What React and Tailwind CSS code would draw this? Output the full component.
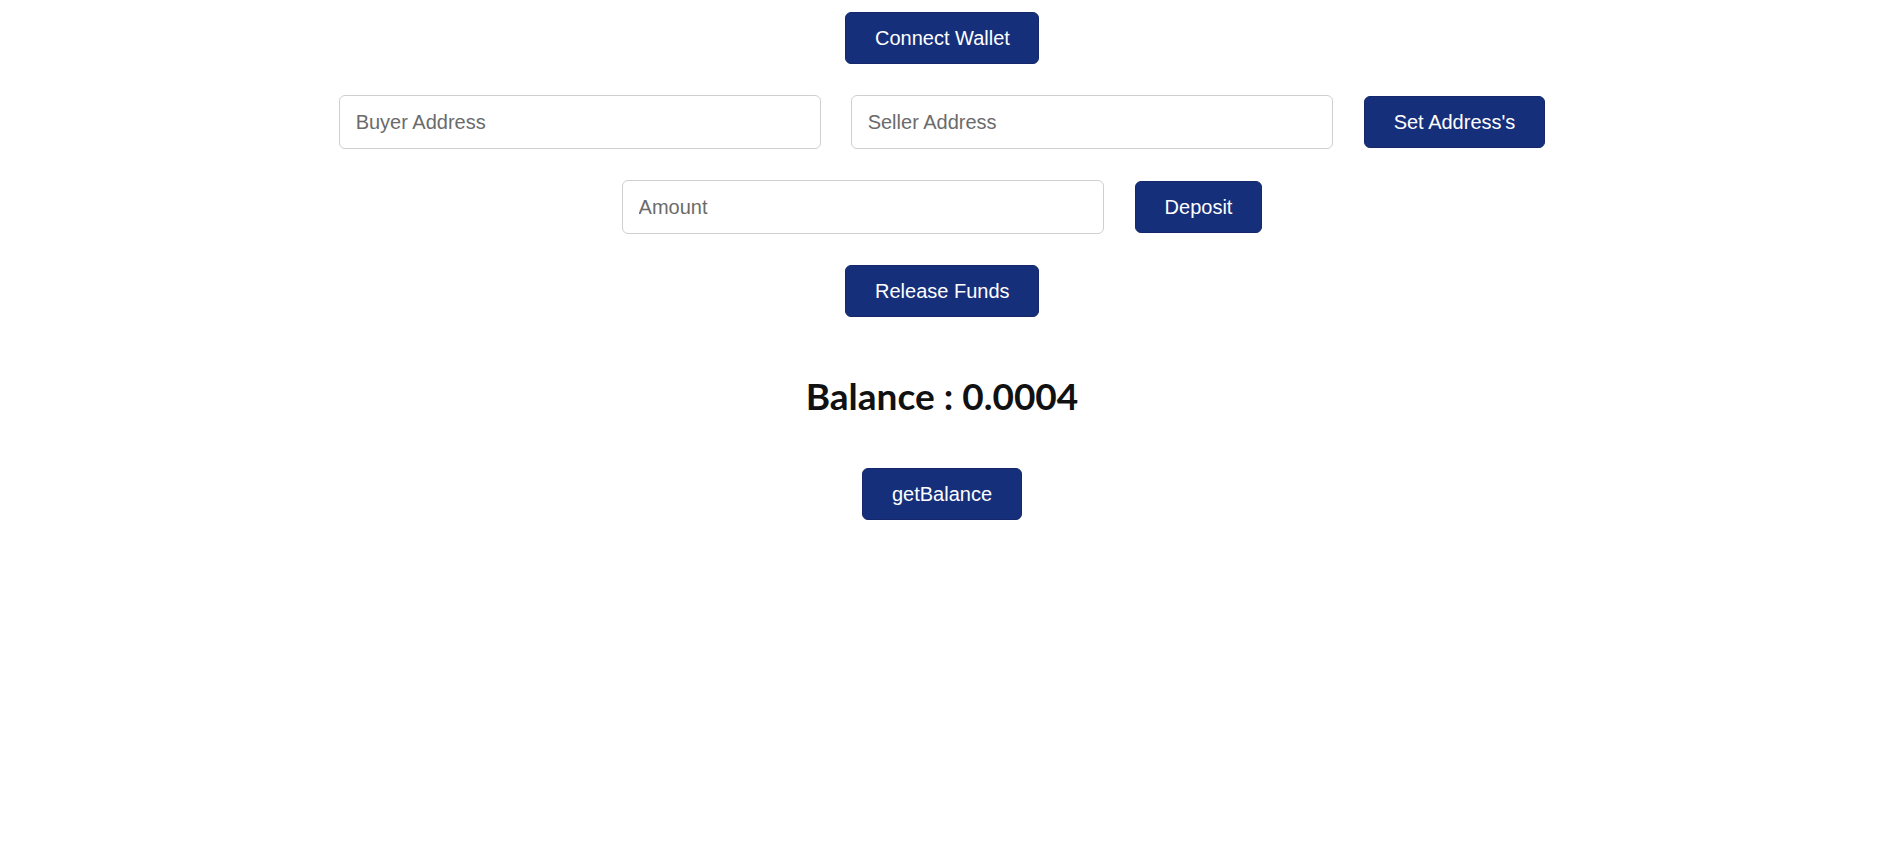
export default function App() {
  const btn =
    "bg-[#162f7b] text-white text-[20px] leading-[22px] py-[14px] px-[29px] rounded-[6px] border border-[#14286b] whitespace-nowrap";
  const inp =
    "w-[482px] h-[54px] border border-[#cfcfcf] rounded-[6px] px-[16px] text-[20px] text-[#222] placeholder:text-[#6b6b6b] outline-none";
  return (
    <div
      className="min-h-screen bg-white flex flex-col items-center pt-[12px] pr-[3px]"
      style={{ fontFamily: '"Liberation Sans", Arial, sans-serif' }}
    >
      <button className={`${btn} w-[194px]`}>Connect Wallet</button>
      <div className="flex items-center gap-[30px] mt-[31px]">
        <input className={inp} placeholder="Buyer Address" />
        <input className={inp} placeholder="Seller Address" />
        <button className={`${btn} ml-[1px]`}>Set Address's</button>
      </div>
      <div className="flex items-center gap-[31px] mt-[31px]">
        <input className={inp} placeholder="Amount" />
        <button className={btn}>Deposit</button>
      </div>
      <button className={`${btn} w-[194px] mt-[31px]`}>Release Funds</button>
      <h2
        className="mt-[57px] text-[37px] leading-[44px] font-bold text-[#111]"
        style={{ fontFamily: 'Lato, "Open Sans", sans-serif' }}
      >
        Balance : 0.0004
      </h2>
      <button className={`${btn} mt-[50px]`}>getBalance</button>
    </div>
  );
}
